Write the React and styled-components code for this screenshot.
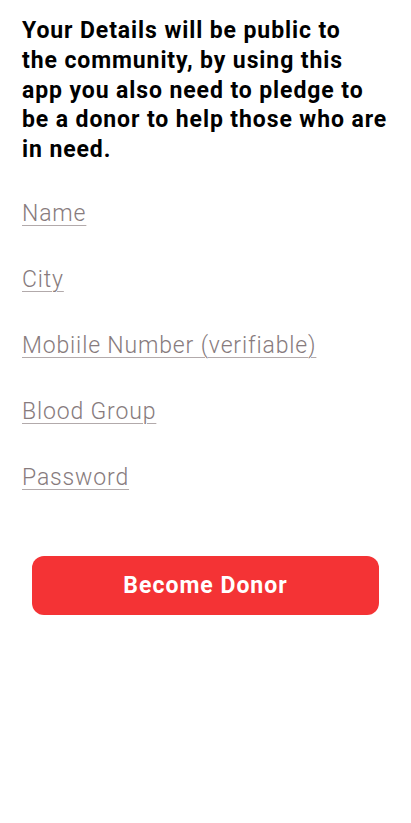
import styled, { createGlobalStyle } from "styled-components";

const GlobalStyle = createGlobalStyle`
  body {
    margin: 0;
    background: #ffffff;
    font-family: Roboto, "Liberation Sans", sans-serif;
  }
`;

const fields = [
  "Name",
  "City",
  "Mobiile Number (verifiable)",
  "Blood Group",
  "Password",
];

const App = () => {
  return (
    <>
      <GlobalStyle />
      <StyledPage>
        <Notice>
          Your Details will be public to
          <br />
          the community, by using this
          <br />
          app you also need to pledge to
          <br />
          be a donor to help those who are
          <br />
          in need.
        </Notice>
        <FieldList>
          {fields.map((f) => (
            <Field key={f}>{f}</Field>
          ))}
        </FieldList>
        <DonorButton>Become Donor</DonorButton>
      </StyledPage>
    </>
  );
};

const StyledPage = styled.div`
  min-height: 823px;
  padding: 16px 22px 0 22px;
  box-sizing: border-box;
  display: flex;
  flex-direction: column;
`;

const Notice = styled.h1`
  margin: 0;
  white-space: nowrap;
  font-size: 23px;
  line-height: 29.75px;
  letter-spacing: 0.9px;
  font-weight: 700;
  color: #000000;
`;

const FieldList = styled.div`
  display: flex;
  flex-direction: column;
  align-items: flex-start;
  gap: 39px;
  margin-top: 35px;
`;

const Field = styled.span`
  font-size: 23px;
  line-height: 27px;
  letter-spacing: 0.85px;
  font-weight: 300;
  color: #877b7d;
  text-decoration: underline;
  text-decoration-color: #b2aaab;
  text-decoration-thickness: 1px;
  text-underline-offset: 4px;
`;

const DonorButton = styled.button`
  margin: 65px 10px 0 10px;
  height: 59px;
  border: none;
  border-radius: 12px;
  background: #f43335;
  color: #ffffff;
  font-family: Roboto, "Liberation Sans", sans-serif;
  font-size: 23px;
  letter-spacing: 1px;
  font-weight: 700;
  cursor: pointer;
`;

export default App;
